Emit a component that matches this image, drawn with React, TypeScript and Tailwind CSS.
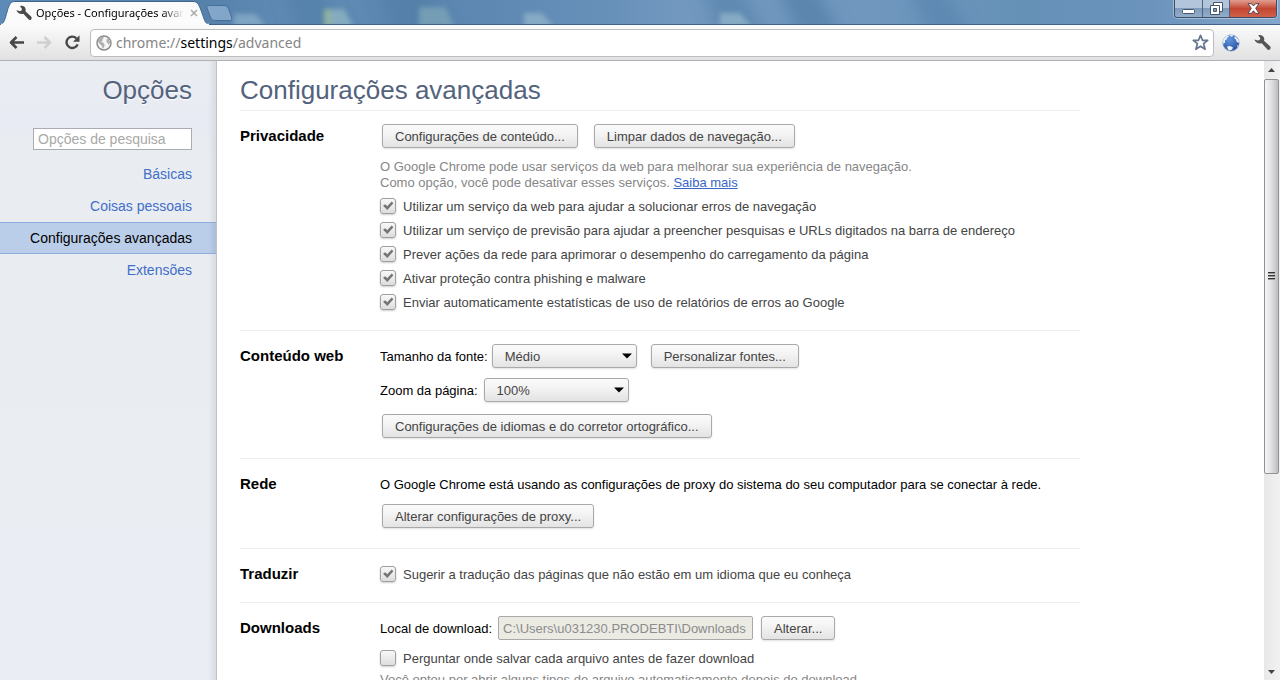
import { useState } from "react";
import type { ReactNode } from "react";

const buttonStyle =
  "h-6 shrink-0 whitespace-nowrap rounded-[3px] border border-[#a9a9a9] bg-linear-to-b from-[#fafafa] from-0% via-[#f4f4f4] via-40% to-[#e3e3e3] px-3 pt-0.5 text-[13px] leading-5 text-[#444] shadow-[0_1px_2px_rgba(0,0,0,0.12)]";

function Glass() {
  return (
    <svg className="absolute inset-0 h-full w-full" viewBox="0 0 1280 25" preserveAspectRatio="none" aria-hidden="true">
      <defs>
        <linearGradient id="sky">
          <stop offset="0" stopColor="#5c8bb8" />
          <stop offset=".16" stopColor="#5681ab" />
          <stop offset=".24" stopColor="#628db6" />
          <stop offset=".32" stopColor="#5b86af" />
          <stop offset=".38" stopColor="#5e88b2" />
          <stop offset=".48" stopColor="#6891ba" />
          <stop offset=".53" stopColor="#7298bf" />
          <stop offset=".68" stopColor="#7098bf" />
          <stop offset=".8" stopColor="#6691b7" />
          <stop offset=".9" stopColor="#6b93bc" />
          <stop offset="1" stopColor="#84a6ca" />
        </linearGradient>
        <filter id="soft" x="-40%" y="-60%" width="180%" height="220%">
          <feGaussianBlur stdDeviation="2.500" />
        </filter>
        <filter id="wide" x="-10%" y="-100%" width="120%" height="300%">
          <feGaussianBlur stdDeviation="8" />
        </filter>
      </defs>
      <rect width="1280" height="25" fill="url(#sky)" />
      <g filter="url(#wide)">
        <path d="M280 -20h35l35 60h-50z" fill="#4c77a0" opacity=".5" />
        <path d="M375 -20h45l35 60h-60z" fill="#4c77a0" opacity=".4" />
        <path d="M700 -20h35l35 60h-50z" fill="#4f7ba5" opacity=".5" />
        <path d="M775 -20h35l35 60h-45z" fill="#4f7ba5" opacity=".65" />
        <path d="M905 -20h35l35 60h-45z" fill="#5682ac" opacity=".6" />
      </g>
      <g filter="url(#soft)">
        <path d="M234 14h22l10 13h-32z" fill="#7fa5c3" />
        <path d="M324 9h20l10 18h-30z" fill="#84abc0" />
        <path d="M324 9h7v18h-7z" fill="#8eb3a0" />
        <path d="M419 7h26l10 20h-36z" fill="#759db5" />
        <path d="M524 13h18l12 14h-30z" fill="#85abc5" />
        <path d="M720 13h20l12 14h-32z" fill="#85abc5" />
      </g>
      <rect y="24" width="1280" height="1" fill="#3f648c" />
    </svg>
  );
}

function Wrench({ className }: { className: string }) {
  return (
    <svg className={className} viewBox="0 0 17 17" fill="currentColor" aria-hidden="true">
      <path d="M4.300 1.200C6.800 .3 9.600 1.600 10.200 4.200 10.400 5.100 10.300 5.900 10 6.700L16 12.300C16.900 13.200 16.900 14.500 16 15.300 15.200 16.100 14 16.100 13.200 15.200L7.800 9.300C5.100 10.100 2.200 9 .8 6.500L.5 5.500 3.600 6.500C4.700 6.800 5.900 6.200 6.200 5.100 6.500 4.100 6 3.200 5.200 2.700Z" />
    </svg>
  );
}

function TitleBar() {
  return (
    <header className="relative flex h-[25px] shrink-0 overflow-hidden">
      <Glass />
      <div className="relative grid w-[210px] shrink-0">
        <svg className="col-start-1 row-start-1" width="210" height="25" viewBox="0 0 210 25" aria-hidden="true">
          <path d="M0 25C4 24 5 19 7 12C9 4 11 1.500 15 1.500H193C198 1.500 199 5 202 13C204.500 20 205 24 210 25Z" fill="#fbfbfb" stroke="#416791" />
          <path d="M1 24.500H209" stroke="#fbfbfb" strokeWidth="1.500" />
        </svg>
        <div className="col-start-1 row-start-1 flex items-center gap-1 pl-4">
          <Wrench className="size-4 shrink-0 text-[#4a4a4a]" />
          <span className="w-[148px] overflow-hidden whitespace-nowrap bg-linear-to-r from-black from-85% to-transparent bg-clip-text font-['Noto_Sans',sans-serif] text-[11px] leading-5 text-transparent">
            Opções - Configurações avançadas
          </span>
          <button aria-label="Fechar guia" className="flex size-3 items-center justify-center">
            <svg width="8" height="8" viewBox="0 0 8 8" fill="none" stroke="#aaa" strokeWidth="1.500" aria-hidden="true">
              <path d="M1 1l6 6M7 1l-6 6" />
            </svg>
          </button>
        </div>
      </div>
      <button aria-label="Nova guia" className="relative -ml-1 mt-[5px] h-4">
        <svg width="27" height="16" viewBox="0 0 27 16" aria-hidden="true">
          <path d="M2.500.5H18C21 .5 22 2 23 5L25.500 12C26 14.500 25.500 15.500 24 15.500H8.500C6 15.500 5 14 4 11L1 3C.5 1 1 .5 2.500.5Z" fill="#82a6ca" stroke="#466e98" />
        </svg>
      </button>
      <div className="relative ml-auto mr-[3px] flex h-[18px] overflow-hidden rounded-b-[4px] border border-t-0 border-[#3d4e66] shadow-[0_0_0_1px_rgba(255,255,255,0.35)]">
        <button aria-label="Minimizar" className="flex w-7 items-center justify-center border-r border-[#4e6480] bg-linear-to-b from-[#b3c5da] from-45% via-[#7f9bbb] via-50% to-[#93aecb]">
          <svg width="13" height="14" viewBox="0 0 13 14" aria-hidden="true">
            <rect x=".5" y="7.500" width="12" height="4" rx="1" fill="#fff" stroke="#475569" />
          </svg>
        </button>
        <button aria-label="Restaurar" className="flex w-[27px] items-center justify-center border-r border-[#4e6480] bg-linear-to-b from-[#b3c5da] from-45% via-[#7f9bbb] via-50% to-[#93aecb]">
          <svg width="13" height="13" viewBox="0 0 13 13" aria-hidden="true">
            <path d="M3.500.5h9v9h-9z" fill="#fff" stroke="#475569" />
            <path d="M.5 3.500h9v9h-9z" fill="#fff" stroke="#475569" />
            <path d="M3.500 6.500h3v3h-3z" fill="#819bb8" stroke="#475569" />
          </svg>
        </button>
        <button aria-label="Fechar" className="flex w-[46px] items-center justify-center bg-linear-to-b from-[#df9f91] from-0% via-[#c34632] via-50% to-[#d0604a]">
          <svg width="13" height="11" viewBox="0 0 13 11" aria-hidden="true">
            <path d="M1 .7h3.500l2 2.300 2-2.300H12L8.700 5.300 12 10.300H8.500l-2-2.500-2 2.500H1l3.300-5z" fill="#fff" stroke="#5a4650" />
          </svg>
        </button>
      </div>
    </header>
  );
}

function Arrow({ forward = false }: { forward?: boolean }) {
  return (
    <svg width="15" height="13" viewBox="0 0 15 13" fill="none" stroke={forward ? "#d0d0d0" : "#474747"} strokeWidth="2.600" strokeLinejoin="round" aria-hidden="true">
      {forward ? <path d="M0 6.500h12M7.500 1l5.500 5.500L7.500 12" /> : <path d="M15 6.500H3M7.500 1L2 6.500 7.500 12" />}
    </svg>
  );
}

function Toolbar() {
  return (
    <nav aria-label="Navegação" className="flex h-9 shrink-0 items-center border-b border-[#b0b0b8] bg-linear-to-b from-[#fbfbfb] to-[#e1e1e1] px-2">
      <button aria-label="Voltar" className="w-7 pl-px"><Arrow /></button>
      <button aria-label="Avançar" disabled className="w-7 pl-px"><Arrow forward /></button>
      <button aria-label="Recarregar" className="w-[26px] pl-px">
        <svg width="15" height="15" viewBox="0 0 15 15" aria-hidden="true">
          <path d="M11.300 3.300A5.700 5.700 0 1 0 12.600 9.300" fill="none" stroke="#474747" strokeWidth="2.400" />
          <path d="M14.500 .3V6.800H8Z" fill="#474747" />
        </svg>
      </button>
      <div className="flex h-7 flex-1 items-center gap-1 rounded-[4px] border border-[#bdbdc1] bg-white px-[5px]">
        <svg width="16" height="16" viewBox="0 0 16 16" aria-hidden="true">
          <circle cx="8" cy="8" r="7" fill="#f5f5f5" stroke="#8b8b8b" strokeWidth="1.500" />
          <path d="M2 5L4 2.500 7 1.800 8 3 6.500 4 6.800 5.500 5.200 6.500 7.500 8 8.800 10 7.800 12.500 6.500 14 6 11 3.800 9 2 6.800ZM11 3.200l2 1 1.200 3.500-1.700 2L11.500 8 10.300 6.500Z" fill="#b0b0b0" />
        </svg>
        <div className="relative flex-1 font-['Noto_Sans',sans-serif] text-[14px] leading-6">
          <div aria-hidden="true" className="text-[#858585]">chrome://<span className="text-black">settings</span>/advanced</div>
          <input aria-label="Endereço" defaultValue="chrome://settings/advanced" className="absolute inset-0 w-full bg-transparent text-transparent outline-none" />
        </div>
        <button aria-label="Adicionar aos favoritos" className="-mr-px">
          <svg width="17" height="17" viewBox="0 0 17 17" aria-hidden="true">
            <path d="M8.500 1.300l2 5h5.200l-4.100 3.400 1.500 5.600-4.600-3.100-4.600 3.100 1.500-5.600L1.300 6.300h5.200z" fill="#fff" stroke="#66748e" strokeWidth="1.700" strokeLinejoin="round" />
          </svg>
        </button>
      </div>
      <button aria-label="Extensão" className="ml-2">
        <svg width="18" height="18" viewBox="0 0 18 18" aria-hidden="true">
          <defs>
            <radialGradient id="sea" cx=".4" cy=".3" r=".8">
              <stop offset="0" stopColor="#5f96dc" />
              <stop offset="1" stopColor="#244a9b" />
            </radialGradient>
          </defs>
          <circle cx="9" cy="9" r="8.300" fill="url(#sea)" stroke="#b3bed0" strokeWidth=".6" />
          <path d="M1 7L2.500 4 5 2 7.500 1.500 6.500 3 5.500 3.500 4.500 5.500 3 6.500 3 8.500 1.500 10ZM8 .8L11 1.200 10.500 2.800 8.500 2.500ZM12.500 2.200L15.500 4.500 17 7.500 16.500 9 14.500 7.500 14 5.500 12.500 4.500ZM5 12.500L8 12 11 13.500 10 15.500 8 16.500 6 15.500ZM15.500 11l1 .500-1.500 2Z" fill="#edf4fc" />
        </svg>
      </button>
      <button aria-label="Personalizar e controlar" className="ml-[14px] mr-px"><Wrench className="size-[17px] text-[#555]" /></button>
    </nav>
  );
}

const links = ["Básicas", "Coisas pessoais", "Configurações avançadas", "Extensões"];

function Sidebar() {
  return (
    <aside className="w-[217px] shrink-0 border-r border-[#bfc2c9] bg-[linear-gradient(to_left,#d8dbe1,transparent_8px),linear-gradient(#eaedf1,#e8ebf3_60px,#e9edf1_90px,#eaedf3)] text-right">
      <h1 className="px-6 pt-[13px] text-[26px] leading-8 text-[#53637d] [text-shadow:0_1px_1px_white]">Opções</h1>
      <div className="flex justify-end px-6 pt-[22px]">
        <input type="search" aria-label="Opções de pesquisa" placeholder="Opções de pesquisa" className="h-[22px] w-[159px] appearance-none border border-[#a9acb3] bg-white px-1 text-[14px] outline-none placeholder:text-[#a9a9a9]" />
      </div>
      <ul className="pt-2">
        {links.map((link) => (
          <li key={link}>
            <a
              href="#"
              aria-current={link === links[2] ? "page" : undefined}
              className={
                link === links[2]
                  ? "block h-8 whitespace-nowrap border-y border-[#8faadc] bg-[linear-gradient(to_left,#a9bddb,#bbcee9_8px)] pr-6 text-[14px] leading-[30px] text-black"
                  : "block h-8 whitespace-nowrap pr-6 text-[14px] leading-8 text-[#426dc9]"
              }
            >
              {link}
            </a>
          </li>
        ))}
      </ul>
    </aside>
  );
}

function Check({ children, initial = true }: { children: ReactNode; initial?: boolean }) {
  const [on, setOn] = useState(initial);
  return (
    <label className="flex h-6 items-center gap-[7px] text-[#444]">
      <span className="grid size-4 shrink-0">
        <input
          type="checkbox"
          checked={on}
          onChange={() => setOn(!on)}
          className="col-start-1 row-start-1 size-4 appearance-none rounded-[3px] border border-[#a0a0a0] bg-linear-to-b from-[#f8f8f8] to-[#dedede] shadow-[0_1px_2px_rgba(0,0,0,0.2)]"
        />
        {on && (
          <svg className="pointer-events-none col-start-1 row-start-1" width="16" height="16" viewBox="0 0 16 16" aria-hidden="true">
            <path d="M3 7.800l2.200-1.600 2 2.100L11.700 3.600 13.400 5.300 7.300 12Z" fill="#757575" />
          </svg>
        )}
      </span>
      <span className="pt-0.5">{children}</span>
    </label>
  );
}

function Choice({ id, options }: { id: string; options: string[] }) {
  return (
    <div className="grid w-[145px] shrink-0 items-center">
      <select id={id} className={buttonStyle + " col-start-1 row-start-1 w-full appearance-none"}>
        {options.map((option) => (
          <option key={option}>{option}</option>
        ))}
      </select>
      <svg className="pointer-events-none col-start-1 row-start-1 mr-[5px] justify-self-end" width="10" height="6" viewBox="0 0 10 6" aria-hidden="true">
        <path d="M0 .5h10L5 5.500z" fill="#000" />
      </svg>
    </div>
  );
}

function Section({ title, children, tight = false }: { title: string; children: ReactNode; tight?: boolean }) {
  return (
    <section className={tight ? "grid grid-cols-[140px_1fr] border-b border-[#eee] pb-4 pt-[13px]" : "grid grid-cols-[140px_1fr] border-b border-[#eee] pb-5 pt-[13px]"}>
      <h3 className="text-[15px] font-bold leading-6">{title}</h3>
      <div className="min-w-0">{children}</div>
    </section>
  );
}

function ScrollBar() {
  return (
    <div aria-hidden="true" className="flex w-4 shrink-0 flex-col bg-linear-to-r from-[#e8e8e8] to-[#f2f2f2] pr-px">
      <div className="flex h-[18px] items-center justify-center">
        <svg width="7" height="4" viewBox="0 0 7 4"><path d="M0 4h7L3.500 0z" fill="#444" /></svg>
      </div>
      <div className="flex flex-1 flex-col">
        <div className="flex grow-[27] basis-0 items-center justify-center rounded-[2px] border border-[#929292] bg-linear-to-r from-[#f6f6f6] via-[#e3e3e5] via-45% to-[#bdbdc2]">
          <svg width="7" height="9" viewBox="0 0 7 9"><path d="M0 .5h7M0 3.500h7M0 6.500h7" stroke="#333" /><path d="M0 1.500h7M0 4.500h7M0 7.500h7" stroke="#999" /></svg>
        </div>
        <div className="grow-[13] basis-0" />
      </div>
      <div className="flex h-[17px] items-center justify-center">
        <svg width="7" height="4" viewBox="0 0 7 4"><path d="M0 0h7L3.500 4z" fill="#444" /></svg>
      </div>
    </div>
  );
}

export default function App() {
  return (
    <div className="flex h-screen flex-col overflow-hidden bg-white font-['Liberation_Sans',Arial,sans-serif] text-[13px] leading-4 text-black">
      <TitleBar />
      <Toolbar />
      <div className="flex min-h-0 flex-1">
        <Sidebar />
        <main className="min-w-0 flex-1 overflow-hidden pl-[23px] pr-6">
          <div className="w-full max-w-[840px]">
            <h2 className="border-b border-[#eee] pb-1 pt-[13px] text-[26px] leading-8 text-[#53637d]">Configurações avançadas</h2>
            <Section title="Privacidade" tight>
              <div className="flex gap-4 pl-0.5">
                <button className={buttonStyle}>Configurações de conteúdo...</button>
                <button className={buttonStyle}>Limpar dados de navegação...</button>
              </div>
              <p className="pb-[3px] pt-[11px] text-[#868686]">
                O Google Chrome pode usar serviços da web para melhorar sua experiência de navegação.
                <br />
                Como opção, você pode desativar esses serviços.{" "}
                <a href="#" className="text-[#3a66c8] underline">Saiba mais</a>
              </p>
              <Check>Utilizar um serviço da web para ajudar a solucionar erros de navegação</Check>
              <Check>Utilizar um serviço de previsão para ajudar a preencher pesquisas e URLs digitados na barra de endereço</Check>
              <Check>Prever ações da rede para aprimorar o desempenho do carregamento da página</Check>
              <Check>Ativar proteção contra phishing e malware</Check>
              <Check>Enviar automaticamente estatísticas de uso de relatórios de erros ao Google</Check>
            </Section>
            <Section title="Conteúdo web">
              <div className="flex items-center">
                <label htmlFor="font-size" className="mr-1 pt-0.5">Tamanho da fonte:</label>
                <Choice id="font-size" options={["Médio", "Pequeno", "Grande"]} />
                <button className={buttonStyle + " ml-[14px]"}>Personalizar fontes...</button>
              </div>
              <div className="mt-[10px] flex items-center">
                <label htmlFor="zoom" className="mr-[6px] pt-0.5">Zoom da página:</label>
                <Choice id="zoom" options={["100%", "75%", "125%"]} />
              </div>
              <div className="mt-3 flex pl-0.5">
                <button className={buttonStyle}>Configurações de idiomas e do corretor ortográfico...</button>
              </div>
            </Section>
            <Section title="Rede">
              <p className="pt-0.5 leading-[22px]">O Google Chrome está usando as configurações de proxy do sistema do seu computador para se conectar à rede.</p>
              <div className="mt-2 flex pl-0.5">
                <button className={buttonStyle}>Alterar configurações de proxy...</button>
              </div>
            </Section>
            <Section title="Traduzir" tight>
              <Check>Sugerir a tradução das páginas que não estão em um idioma que eu conheça</Check>
            </Section>
            <Section title="Downloads">
              <div className="mb-[6px] flex items-center">
                <label htmlFor="folder" className="mr-[6px] pt-0.5">Local de download:</label>
                <input id="folder" disabled defaultValue="C:\Users\u031230.PRODEBTI\Downloads" className="h-6 w-[255px] rounded-[2px] border border-[#a9a9a9] bg-[#ebebe4] px-1 text-[13px] text-[#8c8c8c]" />
                <button className={buttonStyle + " ml-2"}>Alterar...</button>
              </div>
              <Check initial={false}>Perguntar onde salvar cada arquivo antes de fazer download</Check>
              <p className="pt-0.5 text-[#868686]">Você optou por abrir alguns tipos de arquivo automaticamente depois do download.</p>
            </Section>
          </div>
        </main>
        <ScrollBar />
      </div>
    </div>
  );
}
